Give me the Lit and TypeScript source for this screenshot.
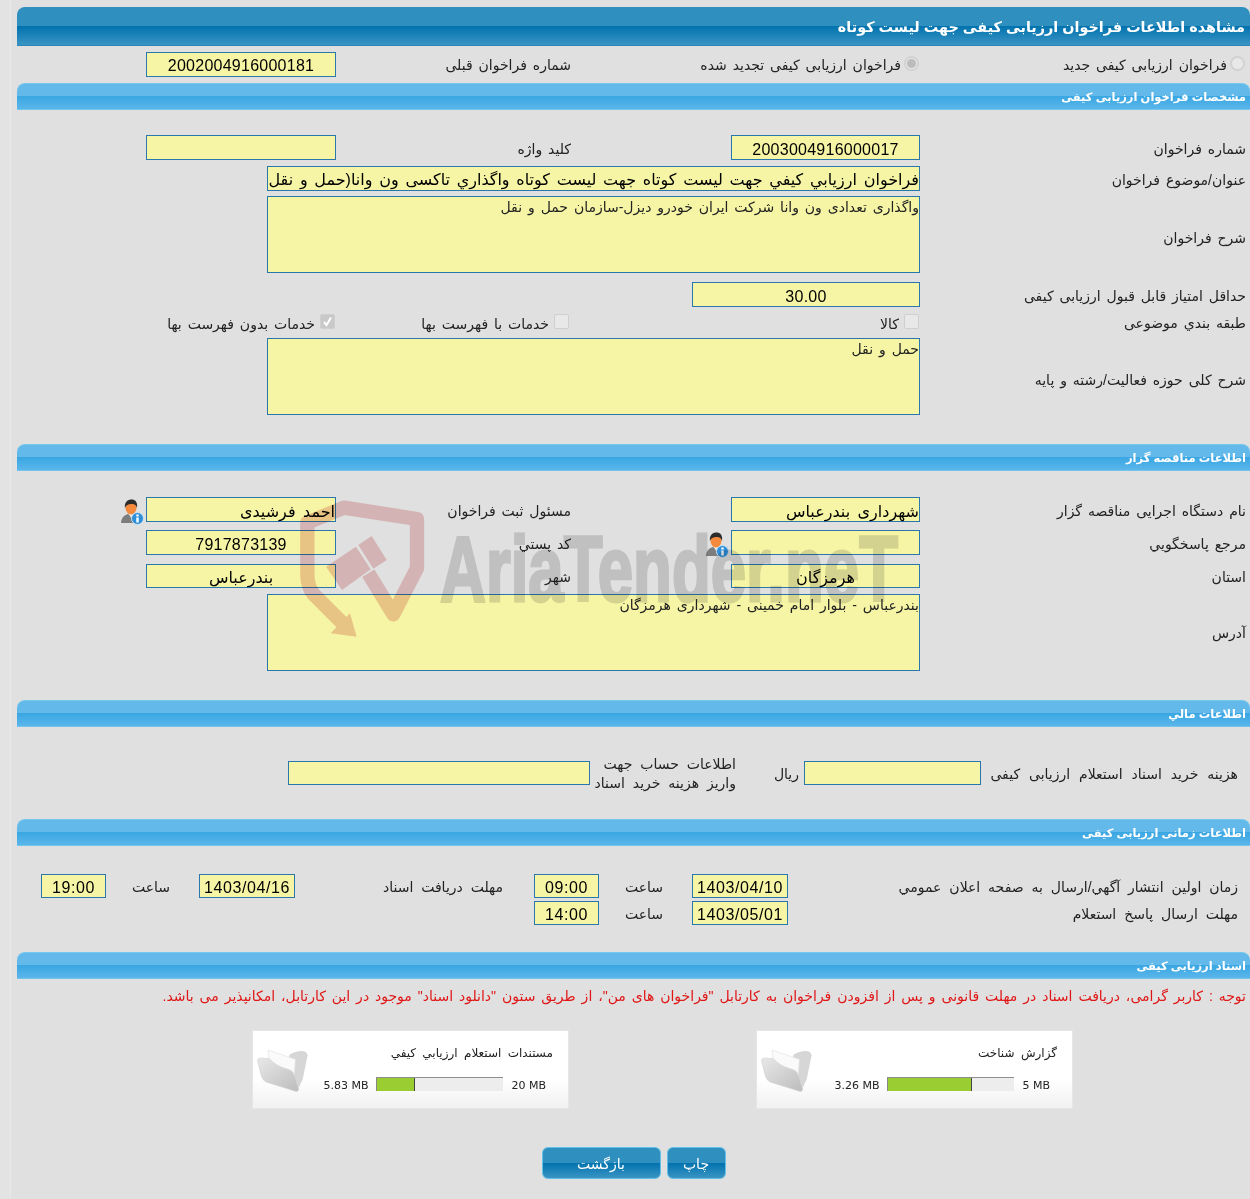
import { LitElement, html, css } from "lit";
import { customElement } from "lit/decorators.js";

const userIcon = html`<svg class="uicon" viewBox="0 0 24 26" width="24" height="26">
  <path d="M1 25c0-6 3-9 7-10l3 2 3-2c2 1 3 2 4 4l-3 5H1z" fill="#7d7d7d"/>
  <path d="M9 15l2 4 2-4z" fill="#eee"/>
  <ellipse cx="11" cy="9" rx="5.500" ry="6.500" fill="#f58a3c"/>
  <path d="M5 9C4 3 8 .5 11.500 .5S18 3 17 9c-1-3-2-4-5.500-4S6 6 5 9z" fill="#2c2c2c"/>
  <circle cx="17.500" cy="19.500" r="6" fill="#2f8fd8" stroke="#cfe4f4"/>
  <rect x="16.300" y="18.500" width="2.400" height="5" fill="#fff"/><rect x="16.300" y="15.500" width="2.400" height="2" fill="#fff"/>
</svg>`;

const folder = html`<svg class="folder" viewBox="0 0 156 138" width="52" height="46">
  <defs><linearGradient id="fg" x1="0" y1="0" x2="1" y2="1"><stop offset="0" stop-color="#e8e8e8"/><stop offset="1" stop-color="#bcbcbc"/></linearGradient></defs>
  <path d="M100 26Q130 10 150 18L155 28 140 100 125 132 95 70Z" fill="#d6d6d6"/>
  <path d="M36 12L118 40 114 100 40 60Z" fill="#fafafa" stroke="#e4e4e4" stroke-width="2"/>
  <path d="M4 42Q6 36 14 36L40 38Q60 60 90 68 112 72 116 90L128 130Q128 138 118 136L30 108Q20 102 16 90Z" fill="url(#fg)" stroke="#d4d4d4" stroke-width="2"/>
</svg>`;

const watermark = html`<svg class="wm" viewBox="0 0 1350 720" width="450" height="240">
  <g fill="none" stroke="#f1cccc" stroke-width="43" stroke-linejoin="round">
    <path d="M730 552L640 462Q622 440 622 400V248L732 203 951 237V385L880 523 805 400"/>
  </g>
  <g fill="#f1cccc">
    <path d="M750 520L770 590 692 580Z"/>
    <path d="M678 380L768 320 812 388 726 450Z"/>
    <path d="M775 315L815 288 860 360 820 386Z"/>
  </g>
</svg><svg class="wm wmt" viewBox="0 0 470 90" width="470" height="90">
  <text x="2" y="78" textLength="458" lengthAdjust="spacingAndGlyphs" font-family="Liberation Sans" font-weight="700" font-size="92" fill="#dbdbdb" stroke="#dbdbdb" stroke-width="3">AriaTender.neT</text>
</svg>`;

@customElement("app-root")
export class AppRoot extends LitElement {
  static styles = css`
    :host { display: block; position: relative; height: 1199px; overflow: hidden; background: #e0e0e0;
      font-family: "Liberation Sans", "DejaVu Sans", sans-serif; font-size: 14px; color: #222; word-spacing: 2px; }
    .rail { position: absolute; left: 0; top: 0; bottom: 0; width: 10px; background: #e3e3e3; }
    .page { direction: rtl; box-sizing: border-box; height: 1199px; margin-left: 10px; padding: 7px 0 0 6px;
      border-left: 1px solid #e9e9e9; }
    .title { height: 39px; box-sizing: border-box; border-radius: 8px 8px 0 0; padding-right: 5px;
      background: linear-gradient(#2f8fbf 0 50%, #0172ae 50%, #3a94c4 100%);
      color: #fff; font-weight: 700; font-size: 14.400px; word-spacing: 0; line-height: 40px; white-space: nowrap; border-bottom: 1px solid #2c86b8; }
    .bar { height: 27px; box-sizing: border-box; border-radius: 8px 8px 0 0; padding-right: 4px;
      border-top: 1px solid #74c8ee; border-bottom: 1px solid #74c4ee;
      background: linear-gradient(#63b9ea 0 48%, #39a6e2 48%, #5ab6ea 100%);
      color: #fff; font-weight: 700; font-size: 11.500px; word-spacing: 0; line-height: 27px; }
    .grid { display: grid; grid-template-columns: 330px 189px 395px 190px; }
    .lbl { grid-column: 1; padding-right: 4px; height: 25px; line-height: 28px; white-space: nowrap; }
    .lbl2 { padding-right: 160px; height: 25px; line-height: 28px; white-space: nowrap; }
    .in { box-sizing: border-box; height: 25px; border: 1px solid #2a78ab; background: #f6f5a5; color: #000;
      font-size: 16px; line-height: 27px; word-spacing: 3px; text-align: center; white-space: nowrap; position: relative; }
    .in.r { text-align: right; }
    .d { letter-spacing: .25px; }
    .dt { letter-spacing: .6px; }
    .h24 { height: 24px; line-height: 25px; }
    .wide { width: 653px; grid-column: 2 / span 3; line-height: 25px; word-spacing: 2.300px; }
    .ta { box-sizing: border-box; width: 653px; height: 77px; grid-column: 2 / span 3; border: 1px solid #2a78ab;
      background: #f6f5a5; color: #222; font-size: 14px; line-height: 20px; }
    .short { width: 228px; grid-column: 2 / span 2; }
    .lbl.mid { align-self: center; height: auto; padding-top: 7px; }
    .mt1 { margin-top: 1px; } .mt2 { margin-top: 2px; } .mt5 { margin-top: 5px; } .mt6 { margin-top: 6px; }
    .mt8 { margin-top: 8px; } .mt9 { margin-top: 9px; } .mt25 { margin-top: 25px; } .mt26 { margin-top: 26px; }
    .mt27 { margin-top: 27px; } .mt29 { margin-top: 29px; } .mt34 { margin-top: 34px; }
    .head { margin-top: 6px; padding-right: 5px; height: 25px; display: flex; }
    .head > * { flex: none; }
    .head .in { line-height: 25px; }
    .radio { display: flex; align-items: center; height: 25px; line-height: 28px; white-space: nowrap; }
    .w1 { width: 326px; } .w2 { width: 348px; } .w3 { width: 235px; } .w4 { width: 190px; }
    .dot { width: 15px; height: 15px; border-radius: 50%; border: 2px solid #d2d2d2; background: #e8e8e8; box-sizing: border-box;
      margin-top: -2px; margin-left: 3px; position: relative; flex: none; }
    .dot.on::after { content: ""; position: absolute; inset: 1px; border-radius: 50%; background: #bcbcbc; }
    .box { width: 15px; height: 15px; border-radius: 2px; border: 1px solid #cfcfcf; background: #e8e8e8; box-sizing: border-box;
      margin-top: -6px; margin-left: 5px; display: flex; align-items: center; justify-content: center; flex: none; }
    .box.on { background: #c9c9c9; }
    .chk { display: flex; align-items: center; white-space: nowrap; line-height: 25px; margin-top: 5px; height: 25px; }
    .c1 { grid-column: 2; padding-right: 1px; }
    .c2 { grid-column: 3; padding-right: 162px; }
    .c3 { grid-column: 4; padding-right: 1px; }
    .uicon { position: absolute; right: calc(100% + 3px); top: 1px; }
    .money { margin-top: 34px; display: flex; height: 24px; align-items: center; word-spacing: 4px; }
    .money > * { flex: none; box-sizing: border-box; white-space: nowrap; }
    .m1 { width: 269px; padding-right: 12px; padding-top: 2px; word-spacing: 5px; }
    .m2 { width: 177px; height: 24px; }
    .m3 { width: 68px; padding-right: 5px; padding-top: 2px; }
    .m4 { width: 146px; line-height: 19px; padding-top: 2px; }
    .m5 { width: 302px; height: 24px; }
    .times { margin-top: 28px; display: grid; row-gap: 3px; word-spacing: 4px;
      grid-template-columns: 462px 96px 93px 65px 239px 96px 93px 65px; }
    .times > div { height: 24px; line-height: 26px; white-space: nowrap; }
    .tl { padding-right: 12px; } .tl2 { padding-right: 31px; }
    .t { text-align: center; padding-right: 3px; }
    .note { color: #e01616; font-size: 14px; margin-top: 8px; padding-right: 4px; line-height: 18px; white-space: nowrap; }
    .cards { display: flex; margin-top: 25px; padding-right: 177px; gap: 187px; }
    .card { width: 317px; height: 79px; box-sizing: border-box; position: relative; padding: 14px 15px 0 0;
      background: linear-gradient(#fff 0 62%, #f1f1f1 100%); border: 1px solid #e6e6e6; font-size: 12px; word-spacing: 3px; }
    .name { line-height: 16px; white-space: nowrap; }
    .meter { direction: ltr; display: flex; justify-content: flex-end; align-items: center; gap: 8px; margin: 16px 7px 0 0; height: 14px; }
    .num { font-family: "DejaVu Sans", sans-serif; font-size: 11px; word-spacing: 0; color: #222; line-height: 16px; padding-top: 3px; white-space: nowrap; }
    .track { width: 127px; height: 14px; background: #ededed; border-top: 1px solid #8e8e8e; box-sizing: border-box; flex: none; }
    .fill { height: 13px; background: #9acd32; border-right: 1px solid #444; border-left: 1px solid #888; box-sizing: border-box; }
    .folder { position: absolute; left: 3px; top: 15px; }
    .btns { display: flex; justify-content: center; gap: 6px; margin-top: 38px; }
    .btn { height: 32px; box-sizing: border-box; border: 1px solid #62bfe6; border-radius: 6px; color: #fff; font-size: 14px; line-height: 33px; text-align: center;
      background: linear-gradient(#2f8fbf 0 50%, #0172ae 50%, #3a94c4 100%); }
    .b1 { width: 59px; } .b2 { width: 119px; }
    .wm { position: absolute; left: 100px; top: 440px; pointer-events: none; mix-blend-mode: multiply; }
    .wmt { left: 438px; top: 523px; }
  `;

  private card(name: string, used: string, total: string, fill: number) {
    return html`<div class="card">
      ${folder}
      <div class="name">${name}</div>
      <div class="meter">
        <span class="num">${used}</span>
        <div class="track"><div class="fill" style="width:${fill}px"></div></div>
        <span class="num">${total}</span>
      </div>
    </div>`;
  }

  render() {
    return html`
      <div class="rail"></div>
      <div class="page">
        <div class="title">مشاهده اطلاعات فراخوان ارزيابی کیفی جهت ليست کوتاه</div>
        <div class="head">
          <span class="radio w1"><i class="dot"></i>فراخوان ارزيابی کیفی جديد</span>
          <span class="radio w2"><i class="dot on"></i>فراخوان ارزيابی کیفی تجديد شده</span>
          <span class="radio w3">شماره فراخوان قبلی</span>
          <div class="in d w4">2002004916000181</div>
        </div>
        <div class="bar mt6">مشخصات فراخوان ارزیابی کیفی</div>
        <div class="grid mt25">
          <div class="lbl">شماره فراخوان</div><div class="in d">2003004916000017</div><div class="lbl2">کليد واژه</div><div class="in"></div>
          <div class="lbl mt6">عنوان/موضوع فراخوان</div><div class="in r wide mt6">فراخوان ارزيابي كيفي جهت ليست كوتاه جهت ليست كوتاه واگذاري تاكسی ون وانا(حمل و نقل</div>
          <div class="lbl mid mt5">شرح فراخوان</div><div class="ta mt5">واگذاری تعدادی ون وانا شرکت ایران خودرو دیزل-سازمان حمل و نقل</div>
          <div class="lbl mt9">حداقل امتياز قابل قبول ارزيابی کیفی</div><div class="in d short mt9">30.00</div>
          <div class="lbl mt2">طبقه بندي موضوعی</div>
          <div class="chk c1"><i class="box"></i>کالا</div>
          <div class="chk c2"><i class="box"></i>خدمات با فهرست بها</div>
          <div class="chk c3"><i class="box on"><svg width="11" height="11" viewBox="0 0 11 11"><path d="M2 6l2.500 3L9 1.500" stroke="#fff" stroke-width="2" fill="none"/></svg></i>خدمات بدون فهرست بها</div>
          <div class="lbl mid">شرح کلی حوزه فعاليت/رشته و پايه</div><div class="ta mt1">حمل و نقل</div>
        </div>
        <div class="bar mt29">اطلاعات مناقصه گزار</div>
        <div class="grid mt26">
          <div class="lbl">نام دستگاه اجرایی مناقصه گزار</div><div class="in r">شهرداری بندرعباس</div><div class="lbl2">مسئول ثبت فراخوان</div><div class="in r">احمد فرشيدی${userIcon}</div>
          <div class="lbl mt8">مرجع پاسخگويي</div><div class="in mt8">${userIcon}</div><div class="lbl2 mt8">کد پستي</div><div class="in d mt8">7917873139</div>
          <div class="lbl mt8">استان</div><div class="in h24 mt9">هرمزگان</div><div class="lbl2 mt8">شهر</div><div class="in h24 mt9">بندرعباس</div>
          <div class="lbl mid">آدرس</div><div class="ta mt6">بندرعباس - بلوار امام خمینی - شهرداری هرمزگان</div>
        </div>
        <div class="bar mt29">اطلاعات مالي</div>
        <div class="money">
          <div class="m1">هزینه خرید اسناد استعلام ارزيابی کیفی</div>
          <div class="in m2"></div>
          <div class="m3">ریال</div>
          <div class="m4">اطلاعات حساب جهت<br>واریز هزینه خرید اسناد</div>
          <div class="in m5"></div>
        </div>
        <div class="bar mt34">اطلاعات زمانی ارزيابی کیفی</div>
        <div class="times">
          <div class="tl">زمان اولين انتشار آگهي/ارسال به صفحه اعلان عمومي</div>
          <div class="in dt">1403/04/10</div><div class="t">ساعت</div><div class="in dt">09:00</div>
          <div class="tl2">مهلت دریافت اسناد</div>
          <div class="in dt">1403/04/16</div><div class="t">ساعت</div><div class="in dt">19:00</div>
          <div class="tl">مهلت ارسال پاسخ استعلام</div>
          <div class="in dt">1403/05/01</div><div class="t">ساعت</div><div class="in dt">14:00</div>
        </div>
        <div class="bar mt27">اسناد ارزيابی کیفی</div>
        <div class="note">توجه : کاربر گرامی، دریافت اسناد در مهلت قانونی و پس از افزودن فراخوان به کارتابل "فراخوان های من"، از طریق ستون "دانلود اسناد" موجود در این کارتابل، امکانپذیر می باشد.</div>
        <div class="cards">
          ${this.card("گزارش شناخت", "3.26 MB", "5 MB", 85)}
          ${this.card("مستندات استعلام ارزيابي كيفي", "5.83 MB", "20 MB", 39)}
        </div>
        <div class="btns">
          <div class="btn b1">چاپ</div>
          <div class="btn b2">بازگشت</div>
        </div>
      </div>
      ${watermark}`;
  }
}
